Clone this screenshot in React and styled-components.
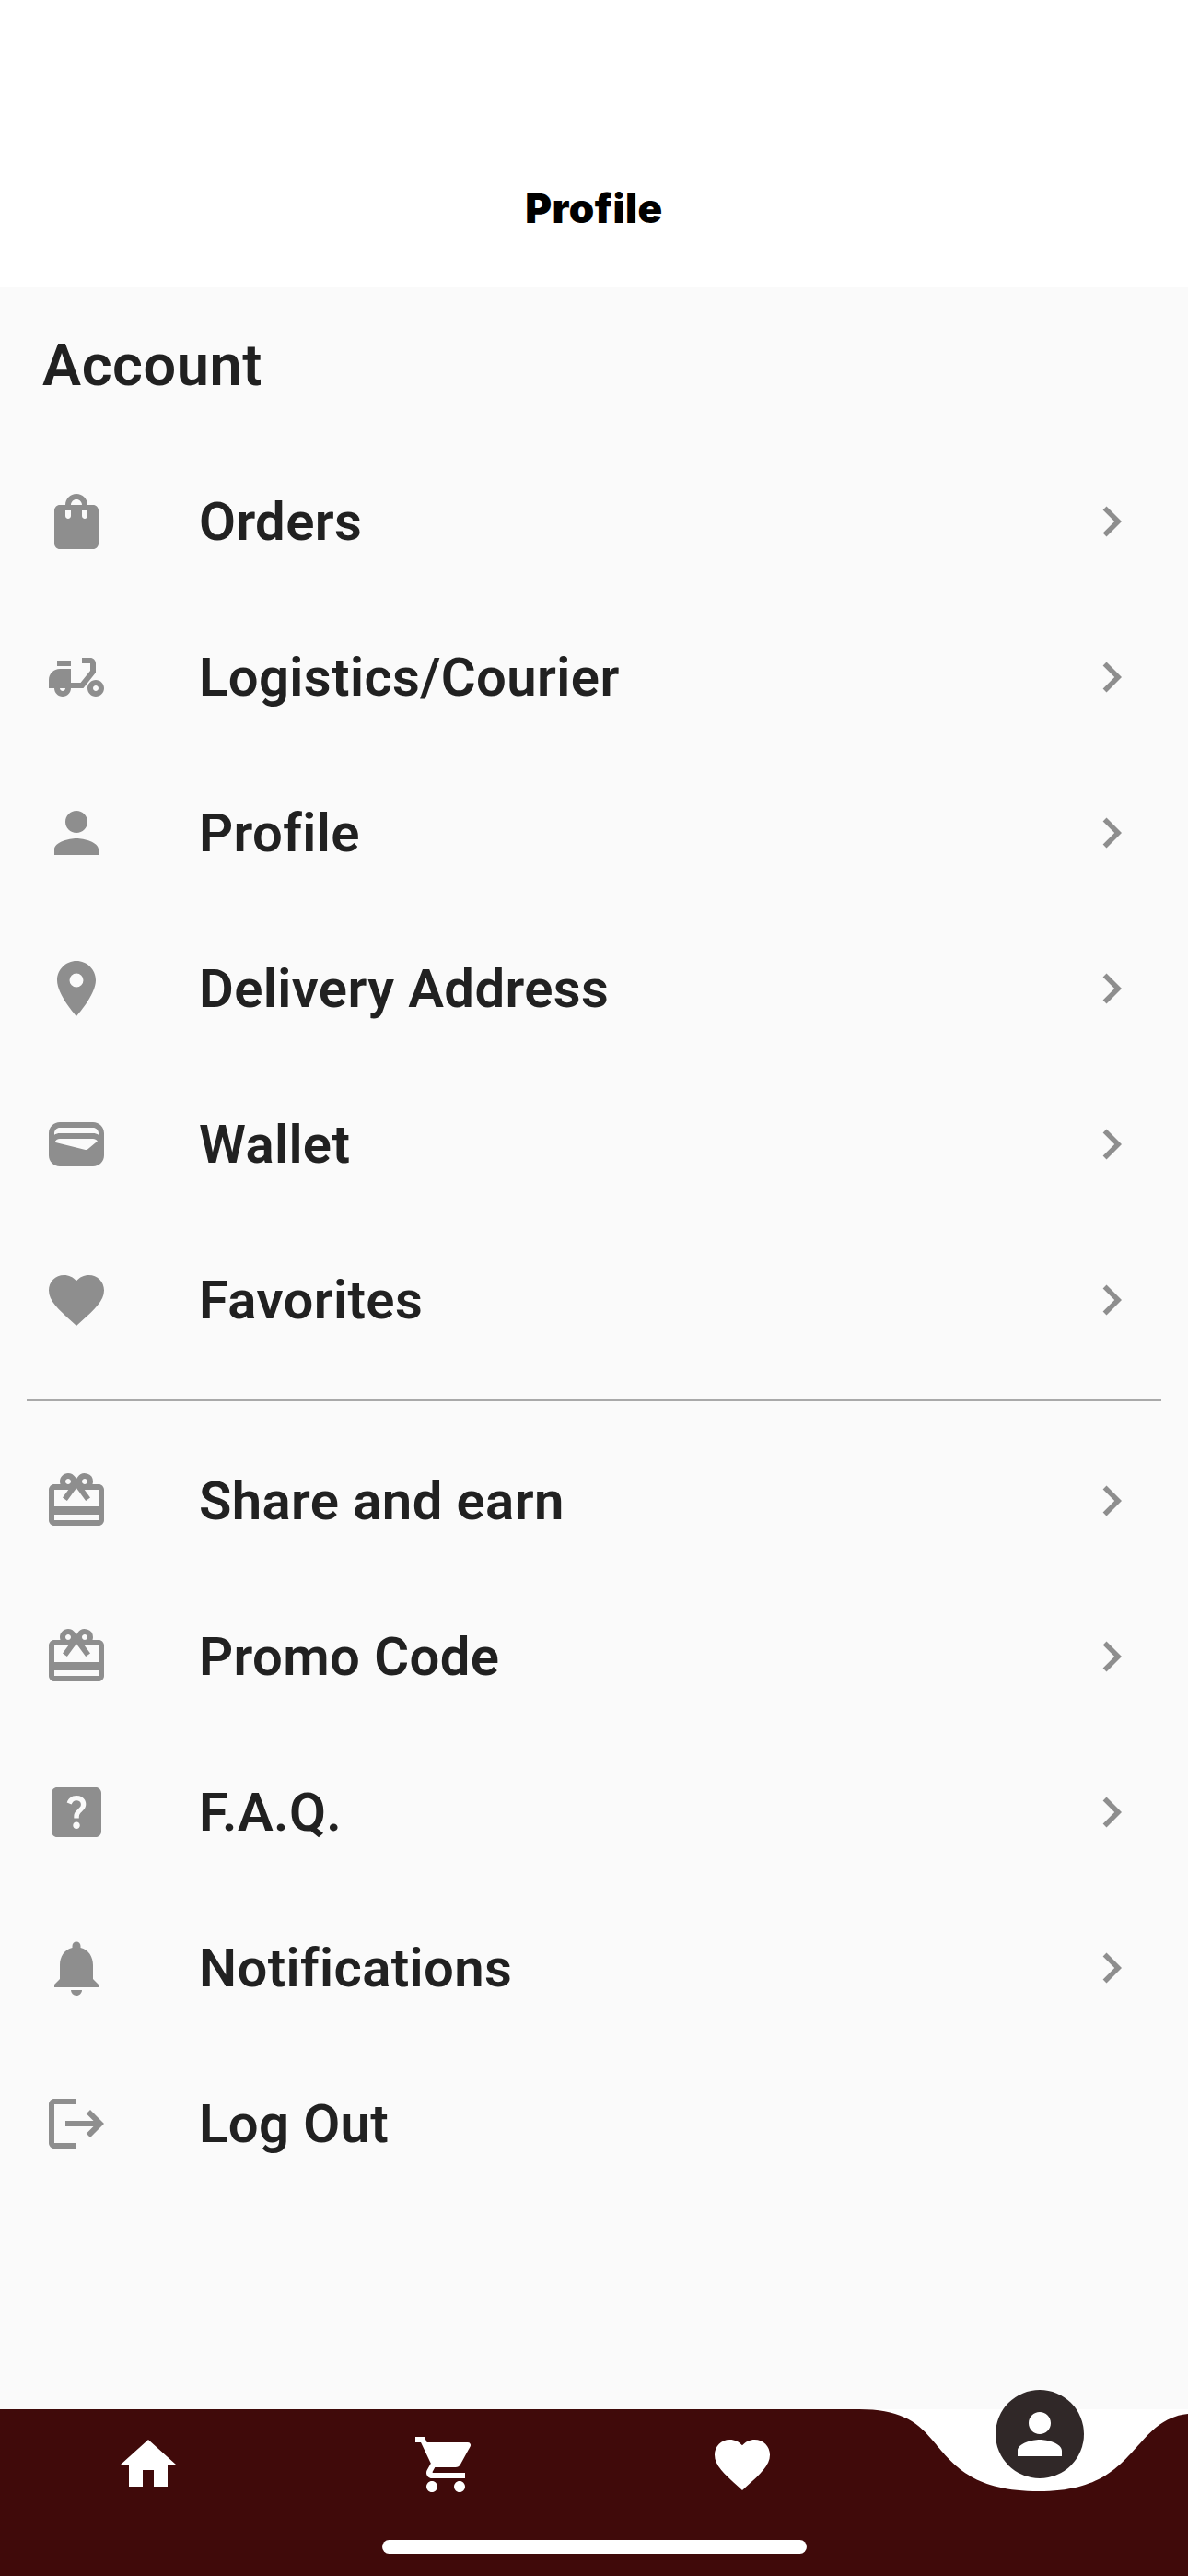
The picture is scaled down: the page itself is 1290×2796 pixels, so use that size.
import styled, { createGlobalStyle } from "styled-components";
import {
  MdShoppingBag,
  MdMoped,
  MdPerson,
  MdPlace,
  MdWallet,
  MdFavorite,
  MdCardGiftcard,
  MdHelpCenter,
  MdNotifications,
  MdLogout,
  MdHome,
  MdShoppingCart,
  MdChevronRight,
} from "react-icons/md";

const GlobalStyle = createGlobalStyle`
  html, body {
    margin: 0;
    padding: 0;
    background: #ffffff;
    font-family: "Roboto", "Liberation Sans", sans-serif;
  }
`;

const Page = styled.div`
  width: 1290px;
  height: 2796px;
  display: flex;
  flex-direction: column;
  overflow: hidden;
`;

const Header = styled.header`
  height: 311px;
  flex: none;
  background: #ffffff;
  display: flex;
  justify-content: center;
  align-items: flex-end;
  padding-bottom: 60px;
  box-sizing: border-box;
`;

const Title = styled.h1`
  margin: 0;
  font-family: "Inter", sans-serif;
  font-size: 44px;
  line-height: 50px;
  font-weight: 900;
  letter-spacing: 0.5px;
  color: #000000;
`;

const Content = styled.main`
  flex: 1;
  background: #fafafa;
  display: flex;
  flex-direction: column;
`;

const SectionTitle = styled.h2`
  margin: 0;
  padding: 49px 46px 0;
  height: 170px;
  box-sizing: border-box;
  font-size: 63px;
  line-height: 74px;
  font-weight: 600;
  letter-spacing: 0.6px;
  color: #212121;
`;

const MenuList = styled.ul`
  list-style: none;
  margin: 0;
  padding: 0;
`;

const Row = styled.li`
  height: 169px;
  padding: 0 47px;
  display: flex;
  align-items: center;
  color: #212121;
`;

const RowIcon = styled.span`
  width: 72px;
  height: 72px;
  flex: none;
  color: #8e8e8e;
  margin-right: 97px;
  svg {
    display: block;
  }
`;

const RowLabel = styled.span`
  flex: 1;
  font-size: 58px;
  line-height: 68px;
  font-weight: 600;
  letter-spacing: 0.4px;
`;

const Chevron = styled(MdChevronRight)`
  flex: none;
  color: #8e8e8e;
  margin-right: 3px;
`;

const Divider = styled.hr`
  margin: 23px 29px;
  border: 0;
  height: 3px;
  background: #a9a9a9;
`;

const BottomBar = styled.nav`
  position: relative;
  flex: none;
  height: 181px;
  background: #ffffff;
  display: grid;
  grid-template-columns: repeat(4, 1fr);
`;

const BarShape = styled.svg`
  position: absolute;
  inset: 0;
  display: block;
`;

const Tab = styled.a`
  position: relative;
  display: flex;
  justify-content: center;
  padding-top: 24px;
  color: #ffffff;
`;

const ActiveTab = styled.a`
  position: absolute;
  right: 113px;
  top: -21px;
  width: 96px;
  height: 96px;
  border-radius: 50%;
  background: #302828;
  color: #ffffff;
  display: flex;
  align-items: center;
  justify-content: center;
`;

const HomeIndicator = styled.div`
  position: absolute;
  left: 415px;
  bottom: 24px;
  width: 461px;
  height: 15px;
  border-radius: 8px;
  background: #ffffff;
`;

const topItems = [
  { label: "Orders", icon: MdShoppingBag },
  { label: "Logistics/Courier", icon: MdMoped },
  { label: "Profile", icon: MdPerson },
  { label: "Delivery Address", icon: MdPlace },
  { label: "Wallet", icon: MdWallet },
  { label: "Favorites", icon: MdFavorite },
];

const bottomItems = [
  { label: "Share and earn", icon: MdCardGiftcard },
  { label: "Promo Code", icon: MdCardGiftcard },
  { label: "F.A.Q.", icon: MdHelpCenter },
  { label: "Notifications", icon: MdNotifications },
  { label: "Log Out", icon: MdLogout, noArrow: true },
];

function MenuRow({ item }) {
  const Icon = item.icon;
  return (
    <Row>
      <RowIcon>
        <Icon size={72} />
      </RowIcon>
      <RowLabel>{item.label}</RowLabel>
      {!item.noArrow && <Chevron size={66} />}
    </Row>
  );
}

export default function App() {
  return (
    <Page>
      <GlobalStyle />
      <Header>
        <Title>Profile</Title>
      </Header>
      <Content>
        <SectionTitle>Account</SectionTitle>
        <MenuList>
          {topItems.map((item) => (
            <MenuRow key={item.label} item={item} />
          ))}
        </MenuList>
        <Divider />
        <MenuList>
          {bottomItems.map((item) => (
            <MenuRow key={item.label} item={item} />
          ))}
        </MenuList>
      </Content>
      <BottomBar>
        <BarShape width="1290" height="181" viewBox="0 0 1290 181">
          <path
            d="M0 0H933C975 0 995 12 1012 33C1035 60 1055 89 1128 89C1195 89 1215 62 1238 37C1255 17 1270 7 1290 5V181H0Z"
            fill="#400a0a"
          />
        </BarShape>
        <Tab>
          <MdHome size={72} />
        </Tab>
        <Tab>
          <MdShoppingCart size={72} />
        </Tab>
        <Tab>
          <MdFavorite size={72} />
        </Tab>
        <Tab />
        <ActiveTab>
          <MdPerson size={72} />
        </ActiveTab>
        <HomeIndicator />
      </BottomBar>
    </Page>
  );
}
